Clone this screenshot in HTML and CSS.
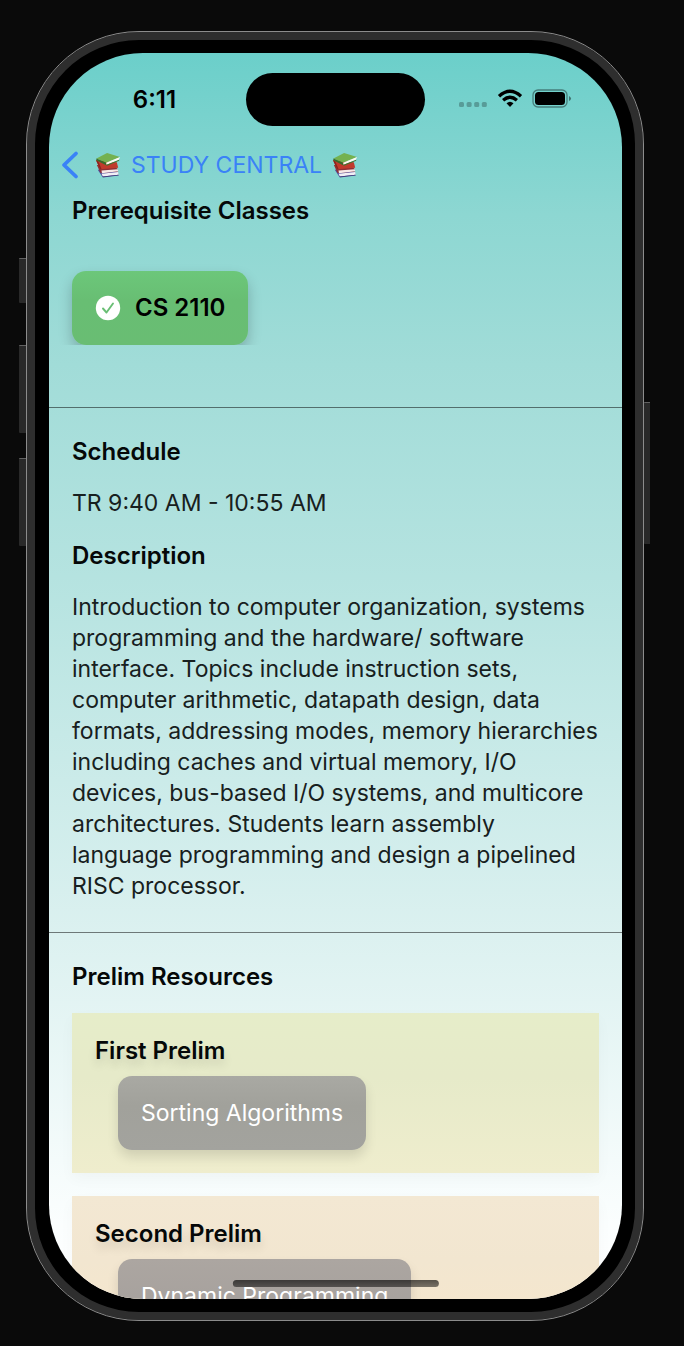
FILE: index.html
```html
<!DOCTYPE html>
<html lang="en">
<head>
<meta charset="utf-8">
<meta name="viewport" content="width=device-width, initial-scale=1">
<title>Study Central</title>
<link rel="stylesheet" href="styles.css">
</head>
<body>
<svg class="symbols" aria-hidden="true">
  <symbol id="books" viewBox="0 0 28 28">
    <path d="M3 19 L8 27 L25 25 L25 22 L20 18Z" fill="#514a9a"/>
    <path d="M7 23.500 L25 21.500 L25.500 24.500 L8.500 26.500Z" fill="#f1eff5"/>
    <path d="M8 26.500 L25.500 24.500 L25.500 25.300 L8.500 27.500Z" fill="#403b7c"/>
    <path d="M2 14 L6 22.500 L25 21 L24 18 L20 14Z" fill="#8f2f35"/>
    <path d="M7 20 L24.500 18.500 L25 20.800 L7.500 22.800Z" fill="#f6e9e7"/>
    <path d="M1 8.500 L5.500 18.500 L25 17 L23.500 11Z" fill="#c13a2c"/>
    <path d="M1 8.500 L5.500 18.500 L7 18.300 L3.500 10Z" fill="#8b2420"/>
    <path d="M1.500 7 L13 1 L27 5.500 L12 11.500Z" fill="#74b150"/>
    <path d="M1.500 7 L12 11.500 L12.500 14.500 L1.500 9Z" fill="#366b2b"/>
    <path d="M12 11.500 L27 5.500 L25.500 8.500 L12.500 13.800Z" fill="#fbfaf2"/>
    <path d="M12.500 13.800 L26 8.300 L26 9.300 L12.500 15Z" fill="#3e7532"/>
  </symbol>
</svg>
<div class="phone">
  <span class="side-key key-action"></span>
  <span class="side-key key-up"></span>
  <span class="side-key key-down"></span>
  <span class="side-key key-power"></span>
  <div class="screen">
    <header class="status-bar">
      <time class="clock">6:11</time>
      <div class="island"></div>
      <div class="status-icons">
        <svg width="29" height="22" viewBox="0 0 29 22" role="img" aria-label="No signal">
          <g fill="#000" opacity="0.25">
            <rect x="0" y="14" width="5" height="5" rx="1.500"/><rect x="7.600" y="14" width="5" height="5" rx="1.500"/><rect x="15.200" y="14" width="5" height="5" rx="1.500"/><rect x="22.800" y="14" width="5" height="5" rx="1.500"/>
          </g>
        </svg>
        <svg width="26" height="22" viewBox="0 0 26 22" role="img" aria-label="Wi-Fi">
          <g fill="none" stroke="#000" stroke-width="3.300">
            <path d="M2 8.200 Q13 -1.800 24 8.200"/><path d="M6.100 12.300 Q13 6.300 19.900 12.300"/>
          </g>
          <path d="M9.500 15.200 Q13 12.200 16.500 15.200 L13 19Z" fill="#000"/>
        </svg>
        <svg width="40" height="22" viewBox="0 0 40 22" role="img" aria-label="Battery full">
          <rect x="1" y="2" width="34" height="17" rx="5" fill="none" stroke="#000" stroke-opacity="0.400" stroke-width="1.300"/>
          <rect x="3" y="4" width="30" height="13" rx="3.500" fill="#000"/>
          <path d="M37 8 Q39 9 39 10.500 Q39 12 37 13Z" fill="#000" fill-opacity="0.450"/>
        </svg>
      </div>
    </header>

    <nav class="nav-bar">
      <a class="back-link" href="#">
        <svg width="18" height="30" viewBox="0 0 18 30" aria-hidden="true"><path d="M15 3.500 L3 15 L15 26.500" fill="none" stroke="#3a82f7" stroke-width="3.800" stroke-linecap="round" stroke-linejoin="round"/></svg>
        <span class="back-title">
          <svg class="books" role="img" aria-label="Books"><use href="#books"/></svg>
          STUDY CENTRAL
          <svg class="books" role="img" aria-label="Books"><use href="#books"/></svg>
        </span>
      </a>
    </nav>

    <main>
      <section class="prerequisites">
        <h2>Prerequisite Classes</h2>
        <div class="class-list">
          <button class="class-chip" type="button">
            <svg width="26" height="26" viewBox="0 0 26 26" aria-hidden="true"><circle cx="13" cy="13" r="12.200" fill="#fff"/><path d="M8 13.500 L11.500 17.500 L18 8.500" fill="none" stroke="#69be74" stroke-width="1.900" stroke-linecap="round" stroke-linejoin="round"/></svg>
            CS 2110
          </button>
        </div>
      </section>

      <section class="details">
        <h2>Schedule</h2>
        <p>TR 9:40 AM - 10:55 AM</p>
        <h2>Description</h2>
        <p>Introduction to computer organization, systems programming and the hardware/ software interface. Topics include instruction sets, computer arithmetic, datapath design, data formats, addressing modes, memory hierarchies including caches and virtual memory, I/O devices, bus-based I/O systems, and multicore architectures. Students learn assembly language programming and design a pipelined RISC processor.</p>
      </section>

      <section class="resources">
        <h2>Prelim Resources</h2>
        <div class="prelims">
          <article class="prelim prelim-first">
            <h3>First Prelim</h3>
            <button class="topic" type="button">Sorting Algorithms</button>
          </article>
          <article class="prelim prelim-second">
            <h3>Second Prelim</h3>
            <button class="topic" type="button">Dynamic Programming</button>
          </article>
        </div>
      </section>
    </main>
    <div class="home-indicator"></div>
  </div>
</div>
</body>
</html>
```
FILE: styles.css
```css
* {
  box-sizing: border-box;
}

body {
  margin: 0;
  height: 100vh;
  padding: 31px 40px 25px 26px;
  background: #0a0a0a;
  color: #050808;
  font-family: Inter, "Liberation Sans", sans-serif;
  font-size: 23px;
  line-height: 31px;
}

h2,
h3,
p {
  margin: 0;
}

h2,
h3 {
  font-size: 24px;
  font-weight: 600;
}

button {
  font: inherit;
  border: 0;
  cursor: pointer;
}

.symbols {
  position: absolute;
  width: 0;
  height: 0;
}

/* Device frame */

.phone {
  position: relative;
  height: 100%;
  padding: 21px 21px 21px 22px;
  background: #000;
  border: 1px solid #8c8c8c;
  border-radius: 113px;
  box-shadow: inset 0 0 0 8px #2e2e2e;
}

.side-key {
  position: absolute;
  left: -8px;
  width: 7px;
  background: #292929;
  border-top: 1px solid #626262;
  border-radius: 1px 0 0 1px;
}

.key-action {
  top: 226px;
  height: 45px;
}

.key-up {
  top: 313px;
  height: 88px;
}

.key-down {
  top: 426px;
  height: 88px;
}

.key-power {
  top: 370px;
  left: auto;
  right: -7px;
  width: 6px;
  height: 142px;
}

.screen {
  position: relative;
  height: 100%;
  overflow: hidden;
  border-radius: 94px;
  background: linear-gradient(#6bcfca 0%, #8dd7d2 13%, #a1dcd8 25%, #b5e3e0 42%, #dcf1f0 71%, #fbfefe 94%, #fff 100%);
}

/* Status bar */

.status-bar {
  display: grid;
  grid-template-columns: 1fr 179px 1fr;
  align-items: center;
  padding-top: 20px;
}

.clock {
  padding-left: 14px;
  text-align: center;
  font-size: 24px;
  font-weight: 600;
  color: #000;
}

.island {
  height: 53px;
  border-radius: 27px;
  background: #000;
}

.status-icons {
  display: flex;
  align-items: center;
  justify-content: flex-end;
  gap: 9px;
  padding: 0 50px 2px 0;
}

/* Navigation */

.nav-bar {
  padding: 21px 12px 12px;
}

.back-link {
  display: flex;
  align-items: center;
  gap: 16px;
  height: 36px;
  color: #3a82f7;
  text-decoration: none;
}

.back-title {
  display: flex;
  align-items: center;
  gap: 10px;
}

.books {
  width: 26px;
  height: 26px;
}

/* Sections */

.prerequisites {
  padding: 0 23px 62px;
}

.class-list {
  margin-top: 45px;
  clip-path: inset(-24px -24px 0 -24px);
}

.class-chip,
.topic {
  line-height: 30px;
  padding: 22px 23px;
  border-radius: 14px;
}

.class-chip {
  display: flex;
  align-items: center;
  gap: 14px;
  background: linear-gradient(#6cc77a, #68be73 40%, #69bd73);
  color: #000;
  font-size: 24px;
  font-weight: 600;
  box-shadow: 0 7px 14px rgba(0, 0, 0, 0.22);
}

.details,
.resources {
  display: flex;
  flex-direction: column;
  gap: 21px;
  padding: 28px 23px 30px;
  border-top: 1px solid rgba(0, 0, 0, 0.5);
}

.details p {
  color: #172020;
}

.prelims {
  display: flex;
  flex-direction: column;
  gap: 23px;
}

.prelim {
  display: flex;
  flex-direction: column;
  align-items: flex-start;
  gap: 10px;
  padding: 22px 23px 23px;
  box-shadow: 0 6px 14px rgba(0, 0, 0, 0.03);
}

.prelim h3 {
  text-shadow: 0 7px 10px rgba(0, 0, 0, 0.12);
}

.prelim-first {
  background: linear-gradient(#e6edc9, #e6eac9 40%, #efedcd);
}

.prelim-second {
  background: linear-gradient(#f3e8d3, #f2e6d0 40%, #f7e7cb);
}

.topic {
  margin-left: 23px;
  background: linear-gradient(#a9a9a3, #a1a19b 40%, #a3a39e);
  color: #fff;
  box-shadow: 0 7px 12px rgba(0, 0, 0, 0.12);
}

.prelim-second .topic {
  background: linear-gradient(#aca6a1, #a39e9b);
}

.home-indicator {
  position: absolute;
  left: 50%;
  bottom: 12px;
  width: 36%;
  height: 7px;
  border-radius: 4px;
  transform: translateX(-50%);
  background: linear-gradient(rgba(0, 0, 0, 0.65), rgba(0, 0, 0, 0.5));
}
```
